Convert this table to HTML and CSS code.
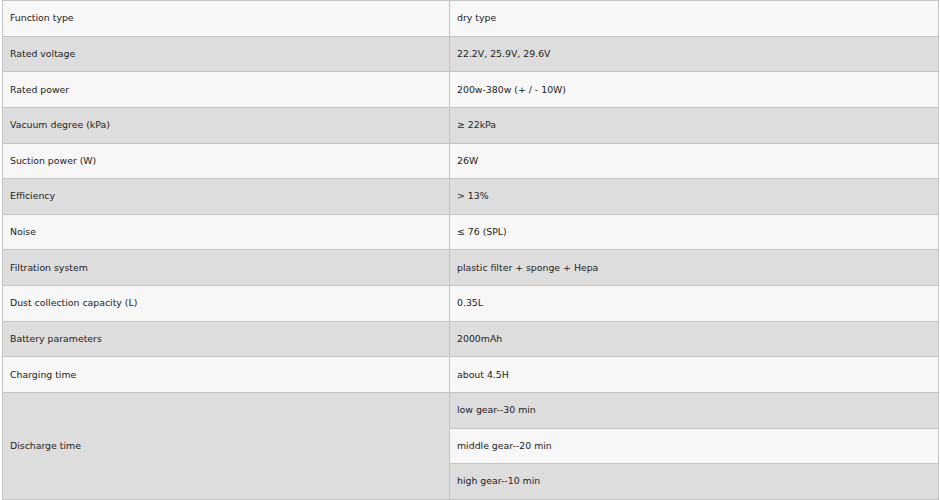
FILE: index.html
```html
<!DOCTYPE html>
<html>
<head>
<meta charset="utf-8">
<link rel="stylesheet" href="styles.css">
</head>
<body>
<table class="spec">
<tbody>
<tr><td class="k">Function type</td><td class="v">dry type</td></tr>
<tr><td class="k">Rated voltage</td><td class="v">22.2V, 25.9V, 29.6V</td></tr>
<tr><td class="k">Rated power</td><td class="v">200w-380w (+ / - 10W)</td></tr>
<tr><td class="k">Vacuum degree (kPa)</td><td class="v">≥ 22kPa</td></tr>
<tr><td class="k">Suction power (W)</td><td class="v">26W</td></tr>
<tr><td class="k">Efficiency</td><td class="v">&gt; 13%</td></tr>
<tr><td class="k">Noise</td><td class="v">≤ 76 (SPL)</td></tr>
<tr><td class="k">Filtration system</td><td class="v">plastic filter + sponge + Hepa</td></tr>
<tr><td class="k">Dust collection capacity (L)</td><td class="v">0.35L</td></tr>
<tr><td class="k">Battery parameters</td><td class="v">2000mAh</td></tr>
<tr><td class="k">Charging time</td><td class="v">about 4.5H</td></tr>
<tr><td class="k" rowspan="3">Discharge time</td><td class="v">low gear--30 min</td></tr>
<tr><td class="v">middle gear--20 min</td></tr>
<tr><td class="v">high gear--10 min</td></tr>
</tbody>
</table>
</body>
</html>
```
FILE: styles.css
```css
html, body {
  margin: 0;
  padding: 0;
  background: #ffffff;
}
.spec {
  margin-left: 2px;
  width: 937px;
  border-collapse: collapse;
  table-layout: fixed;
  font-family: "DejaVu Sans", Verdana, sans-serif;
  font-size: 9.35px;
  color: #222222;
}
.spec td {
  border: 1px solid #c4c4c4;
  height: 35.64px;
  padding: 0 7px 1px;
  vertical-align: middle;
  box-sizing: border-box;
  background: #f7f7f7;
}
.spec td.k {
  width: 447px;
}
.spec tr:nth-child(even) td {
  background: #dddddd;
}
```
